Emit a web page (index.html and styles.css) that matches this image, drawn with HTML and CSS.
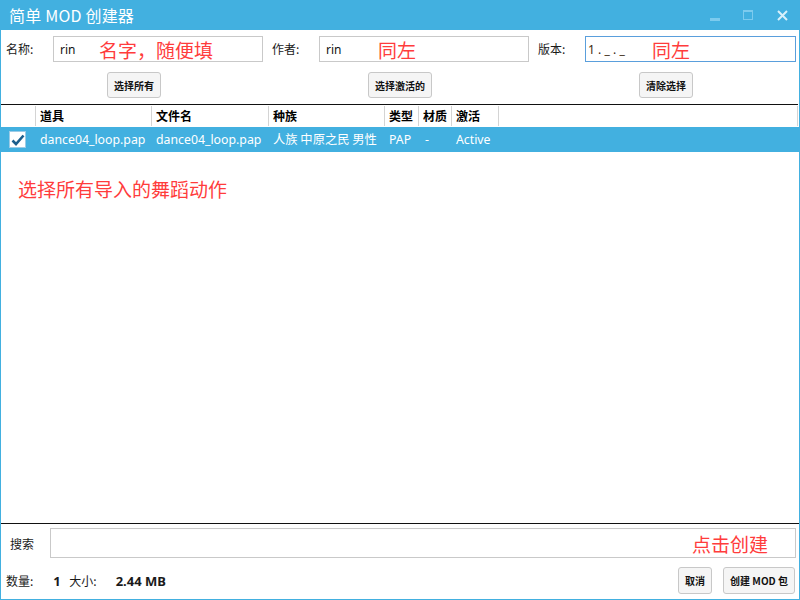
FILE: index.html
```html
<!DOCTYPE html>
<html lang="zh">
<head>
<meta charset="utf-8">
<title>简单 MOD 创建器</title>
<link rel="stylesheet" href="styles.css">
</head>
<body>
<div class="window">
  <div class="titlebar">
    <span class="title">简单 MOD 创建器</span>
    <div class="controls">
      <span class="ctl min"></span>
      <span class="ctl max"></span>
      <svg class="ctl close" width="11" height="11" viewBox="0 0 11 11"><path d="M1 1L10 10M10 1L1 10" stroke="#d8f0fb" stroke-width="2"/></svg>
    </div>
  </div>

  <div class="fields">
    <div class="field">
      <label class="lbl">名称:</label>
      <div class="input"><span class="val">rin</span><span class="note note-name">名字，随便填</span></div>
    </div>
    <div class="field">
      <label class="lbl">作者:</label>
      <div class="input"><span class="val val-author">rin</span><span class="note note-author">同左</span></div>
    </div>
    <div class="field">
      <label class="lbl">版本:</label>
      <div class="input focus"><span class="val ver">1._._</span><span class="note note-ver">同左</span></div>
    </div>
  </div>

  <div class="actions">
    <div class="cell"><button class="btn">选择所有</button></div>
    <div class="cell"><button class="btn">选择激活的</button></div>
    <div class="cell"><button class="btn">清除选择</button></div>
  </div>

  <div class="table">
    <div class="thead">
      <div class="th"></div>
      <div class="th">道具</div>
      <div class="th">文件名</div>
      <div class="th">种族</div>
      <div class="th">类型</div>
      <div class="th">材质</div>
      <div class="th">激活</div>
      <div class="th last"></div>
    </div>
    <div class="trow selected">
      <div class="td chk"><span class="checkbox"><svg width="14" height="12" viewBox="0 0 14 12"><path d="M1.5 6.5L5 10L12.5 1.5" fill="none" stroke="#1b5e8c" stroke-width="2.6"/></svg></span></div>
      <div class="td">dance04_loop.pap</div>
      <div class="td">dance04_loop.pap</div>
      <div class="td">人族 中原之民 男性</div>
      <div class="td">PAP</div>
      <div class="td">-</div>
      <div class="td">Active</div>
      <div class="td"></div>
    </div>
    <div class="note note-select">选择所有导入的舞蹈动作</div>
  </div>

  <div class="search">
    <label class="lbl slbl">搜索</label>
    <div class="input sinput"><span class="note note-create">点击创建</span></div>
  </div>

  <div class="footer">
    <div class="stats">
      <span class="lbl">数量:</span>
      <b class="num">1</b>
      <span class="lbl">大小:</span>
      <b class="size">2.44 MB</b>
    </div>
    <div class="buttons">
      <button class="btn">取消</button>
      <button class="btn">创建 MOD 包</button>
    </div>
  </div>
</div>
</body>
</html>
```

FILE: styles.css
```css
* { box-sizing: border-box; }
html, body { margin: 0; padding: 0; }
body {
  width: 800px;
  height: 600px;
  font-family: "Noto Sans", "Noto Sans CJK SC", sans-serif;
  color: #1a1a1a;
  background: #fff;
  overflow: hidden;
}
.window {
  width: 800px;
  height: 600px;
  border: 1px solid #42b0e0;
  border-top: none;
  display: flex;
  flex-direction: column;
}
.titlebar {
  height: 30px;
  flex: none;
  margin: 0 -1px;
  background: #42b0e0;
  display: flex;
  align-items: center;
  justify-content: space-between;
  padding-left: 9px;
}
.title {
  color: #fff;
  font-size: 16px;
  font-family: "Noto Sans CJK SC", sans-serif;
  letter-spacing: 0.2px;
}
.controls {
  display: flex;
  align-items: center;
  height: 30px;
  padding-right: 12px;
}
.ctl { display: block; }
.min {
  width: 10px; height: 3px;
  background: #7ccbee;
  margin-top: 8px;
  margin-right: 23px;
}
.max {
  width: 10px; height: 10px;
  border: 1px solid #7ccbee;
  border-top-width: 2px;
  margin-right: 24px;
}
.close { margin-top: 1px; }

.fields {
  display: flex;
  flex: none;
  padding: 6px 0 0 5px;
  height: 36px;
}
.field {
  display: flex;
  align-items: flex-start;
  width: 266px;
  flex: none;
}
.lbl {
  font-size: 12px;
  font-family: "Noto Sans CJK SC", sans-serif;
  color: #1a1a1a;
}
.field .lbl {
  width: 47px;
  line-height: 26px;
}
.input {
  width: 210px;
  height: 26px;
  border: 1px solid #c9c9c9;
  display: flex;
  align-items: center;
  padding-left: 6px;
}
.input.focus { border-color: #5a9fdc; width: 211px; padding-left: 2px; }
.val {
  font-size: 12px;
  color: #111;
  width: 39px;
}
.val-author { width: 52px; }
.ver {
  letter-spacing: 3.2px;
  font-size: 12px;
  color: #3a2a10;
  width: 64px;
}
.note {
  color: #ff3c3c;
  font-family: "Noto Sans CJK SC", sans-serif;
  font-size: 19px;
  line-height: 1;
}

.actions {
  display: flex;
  flex: none;
  height: 38px;
}
.cell {
  flex: 1;
  display: flex;
  justify-content: center;
  padding-top: 6px;
}
.btn {
  height: 26px;
  padding: 0 6px;
  background: #f5f5f5;
  border: 1px solid #c8c8c8;
  border-radius: 3px;
  font-family: "Noto Sans CJK SC", sans-serif;
  font-size: 10px;
  font-weight: 700;
  color: #111;
}

.table {
  flex: 1;
  border-top: 1px solid #111;
  margin-right: 1px;
  display: flex;
  flex-direction: column;
}
.thead, .trow {
  display: grid;
  grid-template-columns: 35px 116px 117px 116px 34px 33px 47px 1fr;
}
.thead { height: 22px; }
.th {
  font-family: "Noto Sans CJK SC", sans-serif;
  font-size: 12px;
  font-weight: 700;
  color: #000;
  line-height: 20px;
  padding-left: 4px;
  border-right: 1px solid #d4d4d4;
  margin: 1px 0 2px;
}
.trow.selected {
  background: #42b0e0;
  height: 25px;
  margin-right: -1px;
}
.td {
  color: #fff;
  font-size: 12.3px;
  line-height: 25px;
  padding-left: 4px;
  white-space: nowrap;
  font-family: "Noto Sans", "Noto Sans CJK SC", sans-serif;
}
.td:nth-child(4) { font-family: "Noto Sans CJK SC", sans-serif; }
.td:nth-child(6) { padding-left: 6px; }
.td.chk {
  display: flex;
  align-items: center;
  padding-left: 8px;
}
.checkbox {
  width: 17px;
  height: 17px;
  background: #fff;
  border: 1px solid #9ccbe6;
  display: flex;
  align-items: center;
  justify-content: center;
}
.note-select {
  margin: 27px 0 0 17px;
  font-size: 19px;
}

.search {
  flex: none;
  border-top: 1px solid #111;
  display: flex;
  align-items: center;
  padding: 4px 3px 0 9px;
  height: 35px;
}
.slbl { width: 40px; font-size: 12px; }
.sinput {
  flex: 1;
  height: 30px;
  justify-content: flex-end;
  padding-right: 27px;
}

.footer {
  flex: none;
  height: 41px;
  display: flex;
  justify-content: space-between;
  align-items: flex-start;
  padding: 9px 4px 0 5px;
}
.stats {
  display: flex;
  align-items: center;
  height: 27px;
  font-size: 12px;
}
.stats .num { margin-left: 20px; width: 16px; font-size: 13px; }
.stats .size { margin-left: 19px; font-size: 13px; }
.buttons {
  display: flex;
  gap: 11px;
}
.buttons .btn { height: 27px; padding: 0 6px; }
```
